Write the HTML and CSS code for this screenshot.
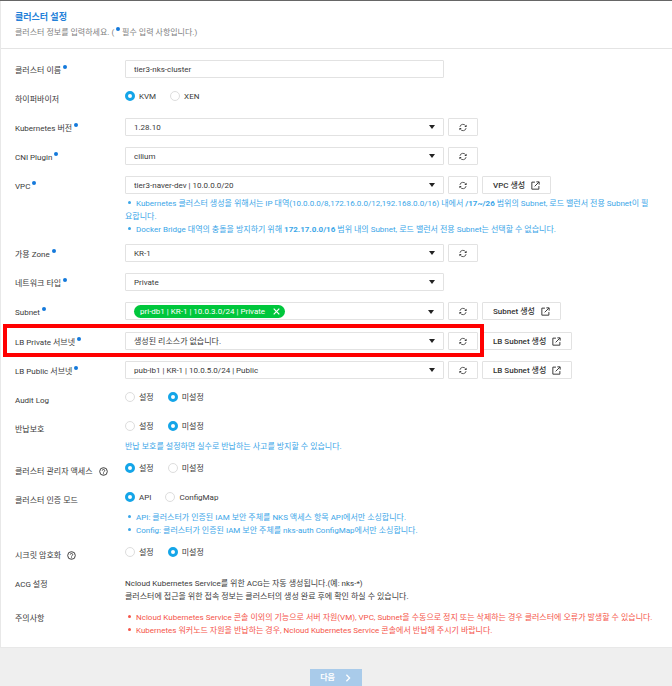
FILE: index.html
```
<!DOCTYPE html>
<html lang="ko">
<head>
  <meta charset="UTF-8" />
  <meta name="viewport" content="width=device-width, initial-scale=1" />
  <title>클러스터 설정</title>
  <link rel="stylesheet" href="styles.css">
</head>
<body>
  <svg class="sprite" aria-hidden="true">
    <symbol id="icon-refresh" viewBox="0 0 16 16">
      <path d="M1.8 6.8A6.2 6.2 0 0 1 13.2 4.6M14.2 9.2A6.2 6.2 0 0 1 2.8 11.4" fill="none" stroke="currentColor" stroke-width="1.6"/>
      <path d="M15.2 2.4v4.6h-4.6zM.8 13.6V9h4.6z" fill="currentColor"/>
    </symbol>
    <symbol id="icon-external" viewBox="0 0 16 16">
      <path d="M7 2H1.5v12.5H14V9M9.5 1.5h5v5M14 2L6.5 9.5" fill="none" stroke="currentColor" stroke-width="1.7"/>
    </symbol>
    <symbol id="icon-help" viewBox="0 0 16 16">
      <circle cx="8" cy="8" r="6.8" fill="none" stroke="currentColor" stroke-width="1.7"/>
      <path d="M5.8 6.4a2.2 2.2 0 1 1 3.3 1.9c-.8.5-1.1.8-1.1 1.6" fill="none" stroke="currentColor" stroke-width="1.6"/>
      <circle cx="8" cy="12" r="1" fill="currentColor"/>
    </symbol>
    <symbol id="icon-close" viewBox="0 0 10 10">
      <path d="M1 1l8 8M9 1L1 9" fill="none" stroke="currentColor" stroke-width="1.7"/>
    </symbol>
    <symbol id="icon-next" viewBox="0 0 10 10">
      <path d="M3 1l4 4-4 4" fill="none" stroke="currentColor" stroke-width="1.6"/>
    </symbol>
  </svg>

  <form class="page">
    <div class="card">
      <header class="card-header">
        <h1>클러스터 설정</h1>
        <p>클러스터 정보를 입력하세요. (<i class="required"></i> 필수 입력 사항입니다.)</p>
      </header>

      <main class="rows">
        <div class="row">
          <label class="name" for="clusterName">클러스터 이름<i class="required"></i></label>
          <div class="controls">
            <input class="box" type="text" id="clusterName" value="tier3-nks-cluster" required />
          </div>
        </div>

        <div class="row" role="radiogroup" aria-labelledby="hypervisor">
          <span class="name" id="hypervisor">하이퍼바이저</span>
          <div class="radios">
            <label><input type="radio" name="hypervisor" checked />KVM</label>
            <label><input type="radio" name="hypervisor" />XEN</label>
          </div>
        </div>

        <div class="row">
          <label class="name" for="version">Kubernetes 버전<i class="required"></i></label>
          <div class="controls">
            <div class="select"><select class="box" id="version"><option>1.28.10</option></select></div>
            <button type="button" class="btn refresh" aria-label="새로고침"><svg><use href="#icon-refresh"/></svg></button>
          </div>
        </div>

        <div class="row">
          <label class="name" for="cni">CNI Plugin<i class="required"></i></label>
          <div class="controls">
            <div class="select"><select class="box" id="cni"><option>cilium</option></select></div>
            <button type="button" class="btn refresh" aria-label="새로고침"><svg><use href="#icon-refresh"/></svg></button>
          </div>
        </div>

        <div class="row noted">
          <label class="name" for="vpc">VPC<i class="required"></i></label>
          <div>
            <div class="controls">
              <div class="select"><select class="box" id="vpc"><option>tier3-naver-dev | 10.0.0.0/20</option></select></div>
              <button type="button" class="btn refresh" aria-label="새로고침"><svg><use href="#icon-refresh"/></svg></button>
              <button type="button" class="btn">VPC 생성<svg><use href="#icon-external"/></svg></button>
            </div>
            <ul class="notes">
              <li>Kubernetes 클러스터 생성을 위해서는 IP 대역(10.0.0.0/8,172.16.0.0/12,192.168.0.0/16) 내에서 <b>/17~/26</b> 범위의 Subnet, 로드 밸런서 전용 Subnet이 필요합니다.</li>
              <li>Docker Bridge 대역의 충돌을 방지하기 위해 <b>172.17.0.0/16</b> 범위 내의 Subnet, 로드 밸런서 전용 Subnet는 선택할 수 없습니다.</li>
            </ul>
          </div>
        </div>

        <div class="row">
          <label class="name" for="zone">가용 Zone<i class="required"></i></label>
          <div class="controls">
            <div class="select"><select class="box" id="zone"><option>KR-1</option></select></div>
            <button type="button" class="btn refresh" aria-label="새로고침"><svg><use href="#icon-refresh"/></svg></button>
          </div>
        </div>

        <div class="row">
          <label class="name" for="network">네트워크 타입<i class="required"></i></label>
          <div class="controls">
            <div class="select"><select class="box" id="network"><option>Private</option></select></div>
          </div>
        </div>

        <div class="row">
          <span class="name" id="subnet">Subnet<i class="required"></i></span>
          <div class="controls">
            <div class="select box" role="group" aria-labelledby="subnet">
              <span class="tag">pri-db1 | KR-1 | 10.0.3.0/24 | Private
                <button type="button" aria-label="삭제"><svg><use href="#icon-close"/></svg></button>
              </span>
            </div>
            <button type="button" class="btn refresh" aria-label="새로고침"><svg><use href="#icon-refresh"/></svg></button>
            <button type="button" class="btn">Subnet 생성<svg><use href="#icon-external"/></svg></button>
          </div>
        </div>

        <div class="row highlight">
          <label class="name" for="lbPrivate">LB Private 서브넷<i class="required"></i></label>
          <div class="controls">
            <div class="select"><select class="box" id="lbPrivate"><option>생성된 리소스가 없습니다.</option></select></div>
            <button type="button" class="btn refresh" aria-label="새로고침"><svg><use href="#icon-refresh"/></svg></button>
            <button type="button" class="btn">LB Subnet 생성<svg><use href="#icon-external"/></svg></button>
          </div>
        </div>

        <div class="row">
          <label class="name" for="lbPublic">LB Public 서브넷<i class="required"></i></label>
          <div class="controls">
            <div class="select"><select class="box" id="lbPublic"><option>pub-lb1 | KR-1 | 10.0.5.0/24 | Public</option></select></div>
            <button type="button" class="btn refresh" aria-label="새로고침"><svg><use href="#icon-refresh"/></svg></button>
            <button type="button" class="btn">LB Subnet 생성<svg><use href="#icon-external"/></svg></button>
          </div>
        </div>

        <div class="row" role="radiogroup" aria-labelledby="audit">
          <span class="name" id="audit">Audit Log</span>
          <div class="radios">
            <label><input type="radio" name="audit" />설정</label>
            <label><input type="radio" name="audit" checked />미설정</label>
          </div>
        </div>

        <div class="row noted" role="radiogroup" aria-labelledby="protect">
          <span class="name" id="protect">반납보호</span>
          <div>
            <div class="radios">
              <label><input type="radio" name="protect" />설정</label>
              <label><input type="radio" name="protect" checked />미설정</label>
            </div>
            <p class="notes">반납 보호를 설정하면 실수로 반납하는 사고를 방지할 수 있습니다.</p>
          </div>
        </div>

        <div class="row" role="radiogroup" aria-labelledby="access">
          <span class="name" id="access">클러스터 관리자 액세스<svg class="help"><use href="#icon-help"/></svg></span>
          <div class="radios">
            <label><input type="radio" name="access" checked />설정</label>
            <label><input type="radio" name="access" />미설정</label>
          </div>
        </div>

        <div class="row noted" role="radiogroup" aria-labelledby="auth">
          <span class="name" id="auth">클러스터 인증 모드</span>
          <div>
            <div class="radios">
              <label><input type="radio" name="auth" checked />API</label>
              <label><input type="radio" name="auth" />ConfigMap</label>
            </div>
            <ul class="notes">
              <li>API: 클러스터가 인증된 IAM 보안 주체를 NKS 액세스 항목 API에서만 소싱합니다.</li>
              <li>Config: 클러스터가 인증된 IAM 보안 주체를 nks-auth ConfigMap에서만 소싱합니다.</li>
            </ul>
          </div>
        </div>

        <div class="row" role="radiogroup" aria-labelledby="secret">
          <span class="name" id="secret">시크릿 암호화<svg class="help"><use href="#icon-help"/></svg></span>
          <div class="radios">
            <label><input type="radio" name="secret" />설정</label>
            <label><input type="radio" name="secret" checked />미설정</label>
          </div>
        </div>

        <div class="row text">
          <span class="name">ACG 설정</span>
          <p>Ncloud Kubernetes Service를 위한 ACG는 자동 생성됩니다.(예: nks-*)<br>클러스터에 접근을 위한 접속 정보는 클러스터의 생성 완료 후에 확인 하실 수 있습니다.</p>
        </div>

        <div class="row text">
          <span class="name">주의사항</span>
          <ul class="notes warning">
            <li>Ncloud Kubernetes Service 콘솔 이외의 기능으로 서버 자원(VM), VPC, Subnet을 수동으로 정지 또는 삭제하는 경우 클러스터에 오류가 발생할 수 있습니다.</li>
            <li>Kubernetes 워커노드 자원을 반납하는 경우, Ncloud Kubernetes Service 콘솔에서 반납해 주시기 바랍니다.</li>
          </ul>
        </div>
      </main>
    </div>

    <footer class="actions">
      <button type="submit" class="next" disabled>다음<svg><use href="#icon-next"/></svg></button>
    </footer>
  </form>
</body>
</html>
```
FILE: styles.css
```
*, *::before, *::after { box-sizing: border-box; margin: 0; padding: 0; }
body {
  font: 8px/13px Roboto, "Noto Sans CJK KR", sans-serif;
  color: #3a3a3a;
  background: #efefef;
}
input, select, button { font: inherit; color: inherit; }
.sprite { display: none; }
.page { border-top: 1px solid #666; }
.card {
  background: #fff;
  border-left: 1px solid #e8e8e8;
  border-bottom: 1px solid #e8e8e8;
}
.card-header {
  padding: 9px 14px;
  border-bottom: 1px solid #e4e4e4;
}
.card-header h1 {
  font-size: 9px;
  line-height: 14px;
  font-weight: 700;
  color: #2380d8;
}
.card-header p {
  margin-top: 2px;
  color: #808080;
}
.required {
  display: inline-block;
  width: 4px;
  height: 4px;
  margin-left: 2px;
  border-radius: 50%;
  background: #1479db;
  vertical-align: 4px;
}
.rows {
  display: flex;
  flex-direction: column;
  padding: 11px 18px 0 14px;
}
.row {
  position: relative;
  display: grid;
  grid-template-columns: 110px 1fr;
  align-items: start;
  min-height: 18px;
  margin-bottom: 11px;
}
.noted { margin-bottom: 8px; }
.name {
  padding-top: 5px;
  line-height: 12px;
}
.help {
  width: 9px;
  height: 9px;
  margin-left: 6px;
  vertical-align: -2px;
}
.controls {
  display: flex;
  gap: 4px;
}
.box {
  width: 100%;
  max-width: 319px;
  height: 18px;
  padding: 0 8px;
  border: 1px solid #e2e2e2;
  border-radius: 1px;
  background: #fff;
  appearance: none;
}
.select {
  position: relative;
  flex: 0 1 319px;
}
.select::after {
  content: "";
  position: absolute;
  top: 7px;
  right: 9px;
  border: 3px solid transparent;
  border-top: 4px solid #222;
  border-bottom: 0;
}
.select.box {
  display: flex;
  align-items: center;
}
.tag {
  display: flex;
  align-items: center;
  gap: 8px;
  height: 13px;
  padding: 0 5px 0 6px;
  border-radius: 7px;
  background: #00c73c;
  color: #fff;
}
.tag button {
  display: flex;
  border: 0;
  background: none;
}
.tag svg { width: 7px; height: 7px; }
.btn {
  display: flex;
  align-items: center;
  justify-content: center;
  gap: 6px;
  height: 18px;
  padding: 0 10px;
  border: 1px solid #e2e2e2;
  border-radius: 1px;
  background: #fff;
  font-weight: 500;
  color: #333;
  white-space: nowrap;
}
.btn svg { width: 9px; height: 9px; }
.refresh { width: 30px; }
.highlight { margin-top: 1px; }
.highlight::before {
  content: "";
  position: absolute;
  z-index: 1;
  top: -8px;
  left: -12px;
  width: 481px;
  height: 33px;
  border: 4px solid #f00;
  pointer-events: none;
}
.radios {
  display: flex;
  gap: 14px;
  height: 14px;
}
.radios label {
  display: flex;
  align-items: center;
  gap: 4px;
}
.radios input {
  width: 10px;
  height: 10px;
  border: 1px solid #ddd;
  border-radius: 50%;
  background: #fff;
  appearance: none;
}
.radios input:checked { border: 3px solid #14a5e8; }
.notes {
  margin-top: 3px;
  list-style: none;
  color: #3ba6e8;
}
.radios + .notes { margin-top: 7px; }
.notes li::before {
  content: "";
  display: inline-block;
  width: 3px;
  height: 3px;
  margin: 0 5px 0 3px;
  border-radius: 50%;
  background: currentColor;
  vertical-align: 2px;
}
.text { margin-bottom: 5px; }
.text p { padding-top: 3px; }
.text:last-child { margin-bottom: 0; padding-bottom: 10px; }
.notes.warning { color: #f5554a; }
.actions {
  display: flex;
  justify-content: center;
  padding-top: 21px;
}
.next {
  display: flex;
  align-items: center;
  gap: 9px;
  height: 17px;
  padding: 0 10px;
  border: 0;
  background: #a9cbea;
  color: #fff;
  font-weight: 700;
}
.next svg { width: 8px; height: 8px; }
```
